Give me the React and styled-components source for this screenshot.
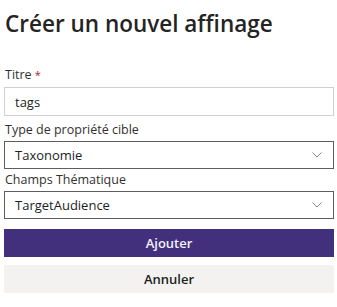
import React from "react";
import styled, { createGlobalStyle } from "styled-components";

const Global = createGlobalStyle`
  html, body { margin: 0; padding: 0; background: #ffffff; }
  body { font-family: "Open Sans", "Noto Sans", sans-serif; color: #323130; }
`;

const Panel = styled.div`
  width: 337px;
  height: 307px;
  box-sizing: border-box;
  padding: 9px 3px 0 4px;
  display: flex;
  flex-direction: column;
`;

const Title = styled.h1`
  margin: 0 0 0 1px;
  font-size: 22.5px;
  line-height: 30px;
  font-weight: 600;
  color: #252423;
  letter-spacing: 0;
`;

const Form = styled.div`
  margin-top: 25px;
  display: flex;
  flex-direction: column;
`;

const Label = styled.label`
  display: block;
  font-size: 12.5px;
  line-height: 22px;
  height: 22px;
  padding-left: 1px;
  color: #323130;
`;

const Required = styled.span`
  color: #a4262c;
  margin-left: 3px;
  font-size: 11px;
`;

const TextBox = styled.div`
  height: 29px;
  box-sizing: border-box;
  border: 1px solid #d2d0ce;
  display: flex;
  align-items: center;
  padding-left: 10px;
  font-size: 13px;
  color: #201f1e;
  margin-top: 1px;
  margin-bottom: 3px;
`;

const Select = styled.div`
  height: 28px;
  box-sizing: border-box;
  border: 1px solid #605e5c;
  display: flex;
  align-items: center;
  justify-content: space-between;
  padding: 0 11px 0 10px;
  font-size: 13px;
  color: #201f1e;
  margin-bottom: ${(p) => p.$mb || 0}px;
`;

const Button = styled.button`
  height: 28px;
  width: 100%;
  border: none;
  font-family: inherit;
  font-size: 13px;
  font-weight: 600;
  background: ${(p) => (p.$primary ? "#42307d" : "#f3f2f1")};
  color: ${(p) => (p.$primary ? "#f4f0fb" : "#201f1e")};
  margin-bottom: 8px;
  padding: 0;
`;

const Chevron = () => (
  <svg width="10" height="6" viewBox="0 0 10 6">
    <path d="M0.5 0.5 L5 5 L9.5 0.5" fill="none" stroke="#7a7886" strokeWidth="0.9" />
  </svg>
);

export default function App() {
  return (
    <>
      <Global />
      <Panel>
        <Title>Créer un nouvel affinage</Title>
        <Form>
          <Label>
            Titre<Required>*</Required>
          </Label>
          <TextBox>tags</TextBox>
          <Label>Type de propriété cible</Label>
          <Select>
            <span>Taxonomie</span>
            <Chevron />
          </Select>
          <Label>Champs Thématique</Label>
          <Select $mb={10}>
            <span>TargetAudience</span>
            <Chevron />
          </Select>
          <Button $primary>Ajouter</Button>
          <Button>Annuler</Button>
        </Form>
      </Panel>
    </>
  );
}
